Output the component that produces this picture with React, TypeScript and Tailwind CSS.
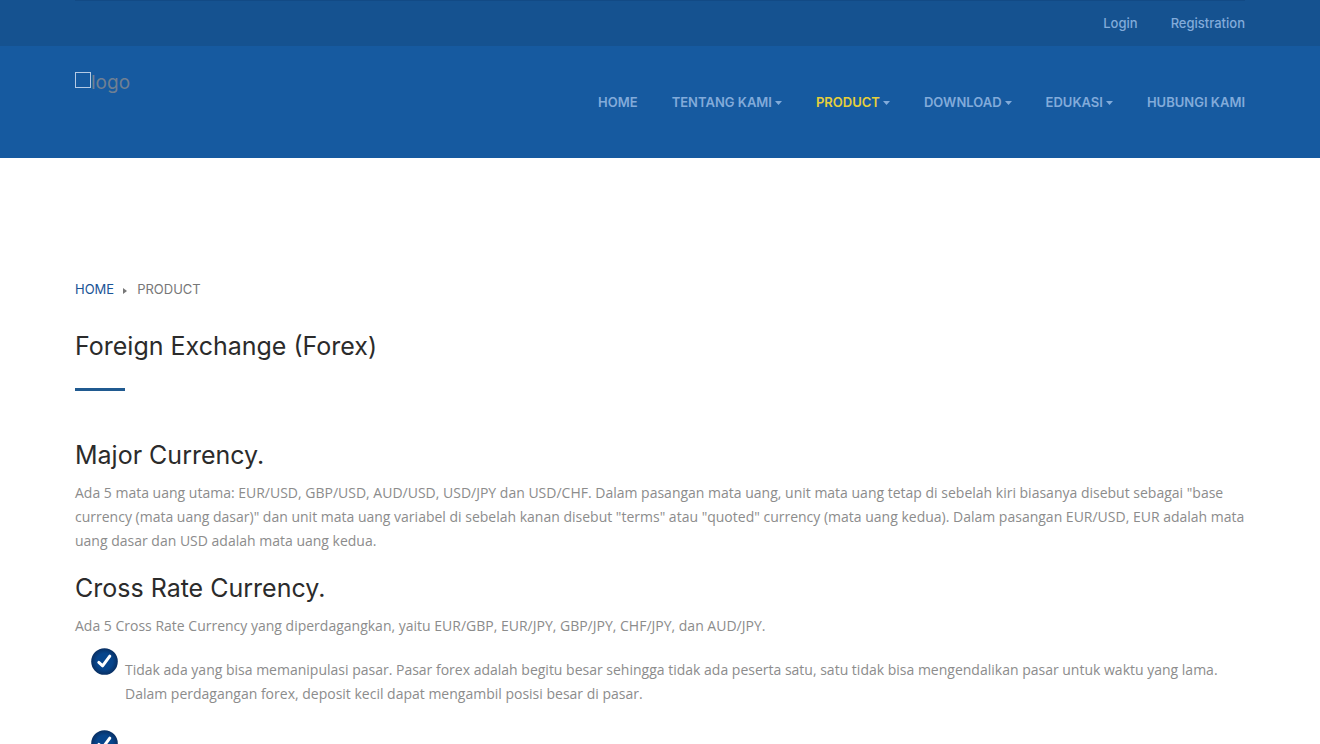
import clsx from "clsx";

type NavItem = {
    label: string;
    active?: boolean;
    dropdown?: boolean;
};

const NAV_ITEMS: NavItem[] = [
    { label: "HOME" },
    { label: "TENTANG KAMI", dropdown: true },
    { label: "PRODUCT", dropdown: true, active: true },
    { label: "DOWNLOAD", dropdown: true },
    { label: "EDUKASI", dropdown: true },
    { label: "HUBUNGI KAMI" },
];

const POINTS = [
    [
        "Tidak ada yang bisa memanipulasi pasar. Pasar forex adalah begitu besar sehingga tidak ada peserta satu, satu tidak bisa mengendalikan pasar untuk waktu yang lama.",
        "Dalam perdagangan forex, deposit kecil dapat mengambil posisi besar di pasar.",
    ],
    [],
];

const CONTAINER = "mx-auto w-full max-w-[1200px] px-[15px]";
const HEADING = "text-[25px] leading-9 text-[#2b2b2b]";
const BODY = "font-['Open_Sans',sans-serif] text-sm leading-6";

function CheckBadge() {
    return (
        <svg viewBox="0 0 27 27" className="size-[27px] shrink-0" aria-hidden="true">
            <defs>
                <radialGradient id="badge">
                    <stop offset="0.6" stopColor="#07458c" />
                    <stop offset="1" stopColor="#082f63" />
                </radialGradient>
            </defs>
            <circle cx="13.5" cy="13.5" r="13.3" fill="url(#badge)" />
            <path d="M7.8 14.4 L11.6 17.8 L18.8 8.2" fill="none" stroke="#fff" strokeWidth="3" strokeLinecap="round" strokeLinejoin="round" />
        </svg>
    );
}

function Header() {
    return (
        <header className="bg-[#165aa0]">
            <div className="bg-[#155290]">
                <div className={CONTAINER}>
                    <div className="flex h-[46px] items-center justify-end gap-[33px] border-t border-[#124a85] text-[13px] font-medium text-[#82abda]">
                        <a href="#">Login</a>
                        <a href="#">Registration</a>
                    </div>
                </div>
            </div>
            <div className={clsx(CONTAINER, "flex h-28 items-center justify-between pt-0.5")}>
                <a href="#" className="flex items-start self-start pt-6 text-[19px] leading-[22px] text-[#708093]">
                    <span className="size-4 border border-[#b5cae4]" />
                    logo
                </a>
                <nav className="flex gap-[34px] text-[13px] font-semibold whitespace-nowrap text-[#82abda]">
                    {NAV_ITEMS.map(item => (
                        <a key={item.label} href="#" className="flex items-center gap-[3px]">
                            <span className={clsx(item.active && "text-[#e6cf3a]")}>{item.label}</span>
                            {item.dropdown && (
                                <svg viewBox="0 0 7 4" className="h-1 w-[7px]" aria-hidden="true">
                                    <path d="M0 0H7L3.5 4Z" fill="currentColor" />
                                </svg>
                            )}
                        </a>
                    ))}
                </nav>
            </div>
        </header>
    );
}

export default function App() {
    return (
        <div className="bg-white font-[Inter,sans-serif] text-[#8c8c8c]">
            <Header />
            <main className={clsx(CONTAINER, "pt-[122px]")}>
                <nav aria-label="Breadcrumb" className="flex h-5 items-center text-[13px]">
                    <a href="#" className="text-[#1a5496]">HOME</a>
                    <svg viewBox="0 0 4 6" className="mt-0.5 mr-2.5 ml-[9px] h-1.5 w-1" aria-hidden="true">
                        <path d="M0 0L4 3L0 6Z" fill="#777" />
                    </svg>
                    <span className="text-[#777]">PRODUCT</span>
                </nav>
                <h1 className={clsx(HEADING, "mt-7")}>Foreign Exchange (Forex)</h1>
                <div className="mt-6 h-[3px] w-[50px] bg-[#205a90]" />

                <h2 className={clsx(HEADING, "mt-[46px]")}>Major Currency.</h2>
                <p className={clsx(BODY, "mt-2")}>
                    Ada 5 mata uang utama: EUR/USD, GBP/USD, AUD/USD, USD/JPY dan USD/CHF. Dalam pasangan mata uang, unit mata uang tetap di sebelah kiri biasanya disebut sebagai "base
                    <br />
                    currency (mata uang dasar)" dan unit mata uang variabel di sebelah kanan disebut "terms" atau "quoted" currency (mata uang kedua). Dalam pasangan EUR/USD, EUR adalah mata
                    <br />
                    uang dasar dan USD adalah mata uang kedua.
                </p>

                <h2 className={clsx(HEADING, "mt-[17px]")}>Cross Rate Currency.</h2>
                <p className={clsx(BODY, "mt-2")}>
                    Ada 5 Cross Rate Currency yang diperdagangkan, yaitu EUR/GBP, EUR/JPY, GBP/JPY, CHF/JPY, dan AUD/JPY.
                </p>
                <ul className={clsx(BODY, "mt-2.5 ml-4")}>
                    {POINTS.map((lines, i) => (
                        <li key={i} className="flex min-h-[82px] gap-[7px]">
                            <CheckBadge />
                            <p className="pt-2.5">
                                {lines.map(line => <span key={line} className="block">{line}</span>)}
                            </p>
                        </li>
                    ))}
                </ul>
            </main>
        </div>
    );
}
